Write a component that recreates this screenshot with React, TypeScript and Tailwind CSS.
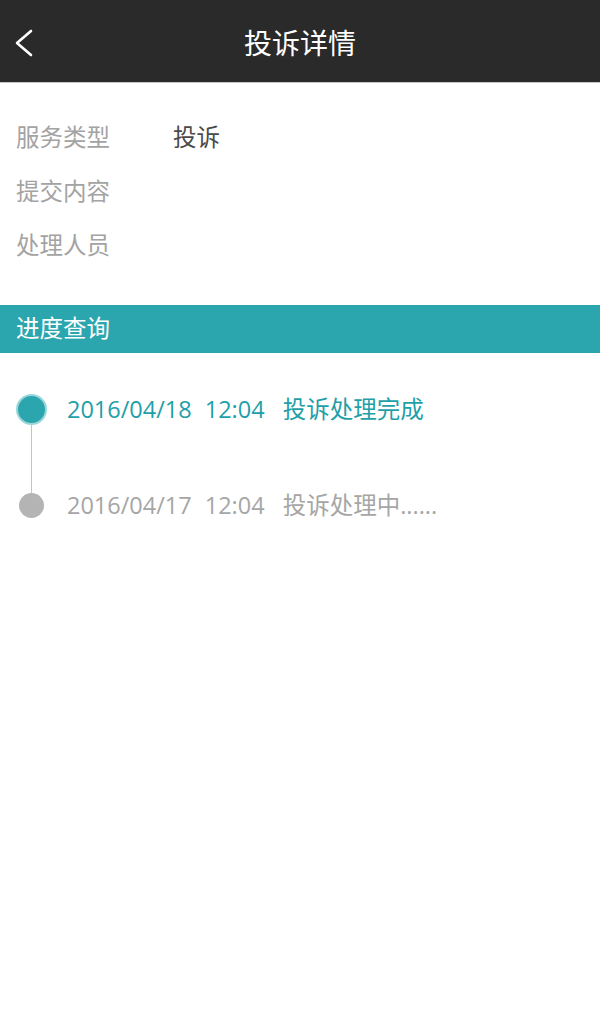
const font = { fontFamily: '"Open Sans", "Noto Sans CJK SC", sans-serif' };

export default function App() {
  return (
    <div className="min-h-[1029px] w-[600px] bg-white" style={font}>
      {/* header */}
      <div className="relative flex h-[83px] items-center justify-center border-b border-[#c8c8c8] bg-[#2a2a2a]">
        <svg className="absolute left-[13px] top-[28px]" width="22" height="30" viewBox="0 0 22 30" fill="none">
          <path d="M18 3 L4 15 L18 27" stroke="#ffffff" strokeWidth="2.6" strokeLinecap="round" strokeLinejoin="round" />
        </svg>
        <h1 className="pt-[3px] text-[28px] leading-none text-white">投诉详情</h1>
      </div>

      {/* info */}
      <div className="flex flex-col pt-[28px] pb-[32px]">
        <div className="flex h-[54px] items-center px-4 text-[23.5px]">
          <span className="w-[157px] text-[#a3a3a3]">服务类型</span>
          <span className="text-[#4a4a4a]">投诉</span>
        </div>
        <div className="flex h-[54px] items-center px-4 text-[23.5px] text-[#a3a3a3]">提交内容</div>
        <div className="flex h-[54px] items-center px-4 text-[23.5px] text-[#a3a3a3]">处理人员</div>
      </div>

      <div className="flex h-[48px] items-center bg-[#2ca6ae] px-4 text-[23.5px] text-white">进度查询</div>

      {/* timeline */}
      <div className="relative pt-[41px] pl-[67px]">
        <div className="absolute left-[31px] top-[71px] h-[72px] w-px bg-[#c4c4c4]" />
        <div className="relative flex h-[32px] items-center text-[23.5px] text-[#1fa0a8]">
          <span className="absolute left-[-51px] top-[0px] h-[31px] w-[31px] rounded-full border-2 border-[#9ad6da] bg-[#2ca6ae]" />
          <span>2016/04/18</span>
          <span className="ml-[13px]">12:04</span>
          <span className="ml-[18px]">投诉处理完成</span>
        </div>
        <div className="relative mt-[64px] flex h-[32px] items-center text-[23.5px] text-[#a6a6a6]">
          <span className="absolute left-[-48px] top-[3px] h-[25px] w-[25px] rounded-full bg-[#b4b4b4]" />
          <span>2016/04/17</span>
          <span className="ml-[13px]">12:04</span>
          <span className="ml-[18px]">投诉处理中......</span>
        </div>
      </div>
    </div>
  );
}
